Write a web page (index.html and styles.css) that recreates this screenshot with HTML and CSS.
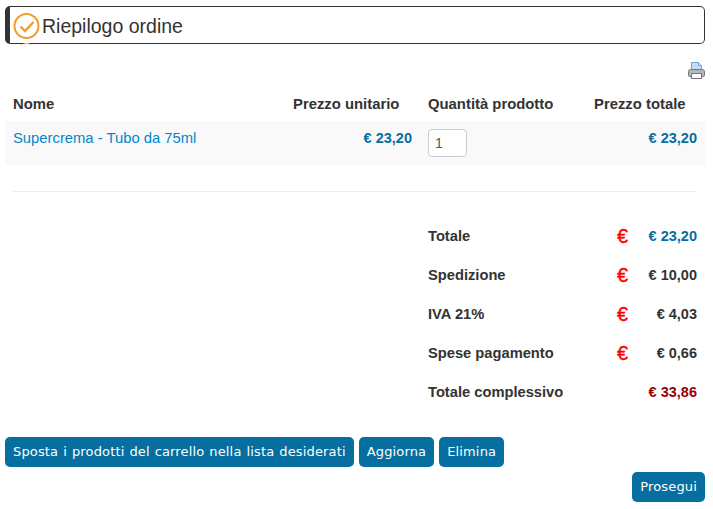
FILE: index.html
```html
<!DOCTYPE html>
<html lang="it">
<head>
<meta charset="utf-8">
<title>Riepilogo ordine</title>
<link rel="stylesheet" href="styles.css">
</head>
<body>
<main class="page">
  <h1 class="title">
    <svg class="title-icon" width="28" height="34" viewBox="0 0 28 34" aria-hidden="true">
      <circle cx="13.500" cy="14" r="12" fill="none" stroke="#f39a2b" stroke-width="2"/>
      <path d="M7.500 14.500l4.500 4.500 8.500-9" fill="none" stroke="#f39a2b" stroke-width="2.400"/>
      <path d="M7 33q6.500-3 13 0" fill="none" stroke="#fbe6cc" stroke-width="1"/>
    </svg>
    Riepilogo ordine
  </h1>
  <div class="print-row">
    <svg width="17" height="17" viewBox="0 0 17 17" aria-hidden="true">
      <path d="M3.500 .5h7l3 3v6h-10z" fill="#c4dcf5" stroke="#6ea3dc"/>
      <path d="M10.500 .5v3h3" fill="#eaf3fc" stroke="#6ea3dc"/>
      <path d="M.5 9.500q0-2 2-2h12q2 0 2 2v4q0 1-1 1h-14q-1 0-1-1z" fill="#b4b7bb" stroke="#74787e"/>
      <rect x="3.500" y="11.500" width="10" height="5" fill="#fff" stroke="#74787e"/>
    </svg>
  </div>
  <table class="cart">
    <thead>
      <tr>
        <th class="col-name">Nome</th>
        <th class="col-unit">Prezzo unitario</th>
        <th class="col-qty">Quantità prodotto</th>
        <th class="col-total">Prezzo totale</th>
      </tr>
    </thead>
    <tbody>
      <tr class="item">
        <td><a class="link" href="#">Supercrema - Tubo da 75ml</a></td>
        <td class="price blue">€ 23,20</td>
        <td><input class="qty" type="text" value="1"></td>
        <td class="price blue">€ 23,20</td>
      </tr>
    </tbody>
  </table>
  <hr class="sep">
  <div class="summary">
    <div class="sum-row"><span class="sum-label">Totale</span><span class="sum-cur">€</span><span class="sum-val blue">€ 23,20</span></div>
    <div class="sum-row"><span class="sum-label">Spedizione</span><span class="sum-cur">€</span><span class="sum-val">€ 10,00</span></div>
    <div class="sum-row"><span class="sum-label">IVA 21%</span><span class="sum-cur">€</span><span class="sum-val">€ 4,03</span></div>
    <div class="sum-row"><span class="sum-label">Spese pagamento</span><span class="sum-cur">€</span><span class="sum-val">€ 0,66</span></div>
    <div class="sum-row"><span class="sum-label">Totale complessivo</span><span class="sum-cur"></span><span class="sum-val dark-red">€ 33,86</span></div>
  </div>
  <div class="actions">
    <button class="btn" type="button">Sposta i prodotti del carrello nella lista desiderati</button>
    <button class="btn" type="button">Aggiorna</button>
    <button class="btn" type="button">Elimina</button>
  </div>
  <div class="next">
    <button class="btn" type="button">Prosegui</button>
  </div>
</main>
</body>
</html>
```
FILE: styles.css
```css
* { box-sizing: border-box; }
html, body { margin: 0; background: #fff; }
body { font-family: "Liberation Sans", Arial, sans-serif; font-size: 14.7px; color: #333; }
.page { padding: 6px 8px 0 5px; }
.title {
  display: flex; align-items: flex-start; gap: 1px;
  height: 38px; margin: 0; padding: 4px 0 0 3px;
  border: 1px solid #333; border-left-width: 5px; border-radius: 5px;
  font-size: 19.5px; font-weight: 400; line-height: 30px; color: #333;
}
.title-icon { flex: none; margin-top: 1px; overflow: visible; }
.print-row { display: flex; justify-content: flex-end; height: 17px; margin-top: 18px; }
.cart { width: 700px; margin-top: 6px; border-collapse: collapse; table-layout: fixed; }
.cart th { padding: 9px 8px 7px; text-align: left; font-size: 14.85px; font-weight: 700; line-height: 20px; color: #333; }
.cart td { padding: 7px 8px 8px; vertical-align: top; line-height: 20px; }
.col-name { width: 280px; }
.col-unit { width: 135px; }
.col-qty { width: 166px; }
.col-total { width: 119px; }
.item { background: #f9f9f9; height: 44px; }
.link { color: #0088cc; font-size: 14.8px; text-decoration: none; }
.price { text-align: right; font-size: 14.5px; font-weight: 700; }
.blue { color: #066ea0; }
.dark-red { color: #990000; }
.qty {
  display: block; width: 39px; height: 28px; margin-top: 1px; padding: 4px 6px;
  border: 1px solid #ccc; border-radius: 4px; background: #fff;
  font: 14px/20px "Liberation Sans", Arial, sans-serif; color: #555;
}
.sep { width: 684px; height: 1px; margin: 26px 0 0 8px; border: 0; background: #eee; }
.summary { margin-top: 24px; padding-left: 423px; }
.sum-row { display: flex; align-items: center; height: 39px; font-weight: 700; }
.sum-label { width: 189px; }
.sum-cur { width: 20px; height: 22px; font-size: 20px; font-weight: 400; color: #f00; line-height: 22px; -webkit-text-stroke: .35px #f00; }
.sum-val { flex: 1; padding-right: 8px; text-align: right; font-size: 14.5px; }
.actions { display: flex; gap: 5px; margin-top: 26px; }
.btn {
  height: 30px; padding: 0 8px; border: 0; border-radius: 5px;
  background: #066ea0; color: #fff;
  font-family: "DejaVu Sans", Verdana, sans-serif; font-size: 13px; line-height: 30px;
  letter-spacing: .15px; word-spacing: .7px;
}
.next { display: flex; justify-content: flex-end; margin-top: 5px; }
```
